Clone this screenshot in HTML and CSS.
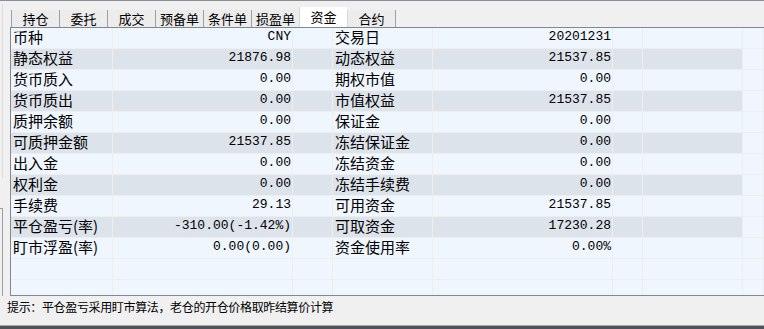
FILE: index.html
```html
<!DOCTYPE html>
<html lang="zh">
<head>
<meta charset="utf-8">
<title>资金</title>
<link rel="stylesheet" href="styles.css">
</head>
<body>
<div class="topline"></div>
<div class="ghost ghost-top"></div>
<div class="ghost ghost-bottom"></div>
<div class="panel">
  <div class="tabs">
    <div class="tab">持仓</div>
    <div class="tab">委托</div>
    <div class="tab">成交</div>
    <div class="tab">预备单</div>
    <div class="tab">条件单</div>
    <div class="tab">损盈单</div>
    <div class="tab active">资金</div>
    <div class="tab">合约</div>
  </div>
  <div class="grid">
    <div class="row"><div class="lbl">币种</div><div class="val">CNY</div><div class="c"></div><div class="lbl">交易日</div><div class="val">20201231</div><div class="c"></div><div class="c"></div><div class="c"></div></div>
    <div class="row alt"><div class="lbl">静态权益</div><div class="val">21876.98</div><div class="c"></div><div class="lbl">动态权益</div><div class="val">21537.85</div><div class="c"></div><div class="c"></div><div class="c light"></div></div>
    <div class="row"><div class="lbl">货币质入</div><div class="val">0.00</div><div class="c"></div><div class="lbl">期权市值</div><div class="val">0.00</div><div class="c"></div><div class="c"></div><div class="c"></div></div>
    <div class="row alt"><div class="lbl">货币质出</div><div class="val">0.00</div><div class="c"></div><div class="lbl">市值权益</div><div class="val">21537.85</div><div class="c"></div><div class="c"></div><div class="c light"></div></div>
    <div class="row"><div class="lbl">质押余额</div><div class="val">0.00</div><div class="c"></div><div class="lbl">保证金</div><div class="val">0.00</div><div class="c"></div><div class="c"></div><div class="c"></div></div>
    <div class="row alt"><div class="lbl">可质押金额</div><div class="val">21537.85</div><div class="c"></div><div class="lbl">冻结保证金</div><div class="val">0.00</div><div class="c"></div><div class="c"></div><div class="c light"></div></div>
    <div class="row"><div class="lbl">出入金</div><div class="val">0.00</div><div class="c"></div><div class="lbl">冻结资金</div><div class="val">0.00</div><div class="c"></div><div class="c"></div><div class="c"></div></div>
    <div class="row alt"><div class="lbl">权利金</div><div class="val">0.00</div><div class="c"></div><div class="lbl">冻结手续费</div><div class="val">0.00</div><div class="c"></div><div class="c"></div><div class="c light"></div></div>
    <div class="row"><div class="lbl">手续费</div><div class="val">29.13</div><div class="c"></div><div class="lbl">可用资金</div><div class="val">21537.85</div><div class="c"></div><div class="c"></div><div class="c"></div></div>
    <div class="row alt"><div class="lbl">平仓盈亏(率)</div><div class="val">-310.00(-1.42%)</div><div class="c"></div><div class="lbl">可取资金</div><div class="val">17230.28</div><div class="c"></div><div class="c"></div><div class="c light"></div></div>
    <div class="row"><div class="lbl">盯市浮盈(率)</div><div class="val">0.00(0.00)</div><div class="c"></div><div class="lbl">资金使用率</div><div class="val">0.00%</div><div class="c"></div><div class="c"></div><div class="c"></div></div>
    <div class="row"><div class="c"></div><div class="c"></div><div class="c"></div><div class="c"></div><div class="c"></div><div class="c"></div><div class="c"></div><div class="c"></div></div>
    <div class="row"><div class="c"></div><div class="c"></div><div class="c"></div><div class="c"></div><div class="c"></div><div class="c"></div><div class="c"></div><div class="c"></div></div>
  </div>
</div>
<div class="status">提示：平仓盈亏采用盯市算法，老仓的开仓价格取昨结算价计算</div>
<div class="bottomline"></div>
<div class="bottombar"></div>
</body>
</html>
```
FILE: styles.css
```css
html, body {
  margin: 0;
  padding: 0;
}
body {
  width: 764px;
  height: 329px;
  overflow: hidden;
  background: #f0f0f0;
  position: relative;
  font-family: "Noto Sans CJK SC", "Noto Sans", sans-serif;
  color: #000;
}
.topline {
  height: 1px;
  background: #8a8e97;
}
.ghost {
  position: absolute;
  left: 2px;
  width: 1px;
}
.ghost-top {
  top: 4px;
  height: 174px;
  background: #dcdcdc;
}
.ghost-bottom {
  top: 208px;
  height: 88px;
  background: #9c9c9c;
}
.ghost-bottom::before {
  content: "";
  position: absolute;
  left: -2px;
  top: 0;
  width: 3px;
  height: 1px;
  background: #9c9c9c;
}
.panel {
  padding-left: 10px;
}
.tabs {
  height: 26px;
  display: flex;
  align-items: flex-end;
  padding-left: 1px;
}
.tab {
  width: 47px;
  height: 17px;
  border-left: 1px solid #a0a0a0;
  background: #ececec;
  font-size: 13px;
  line-height: 17px;
  text-align: center;
}
.tab.active {
  height: 20px;
  line-height: 20px;
  background: #ffffff;
  border-left-color: #d8d8d8;
}
.tab.active + .tab {
  border-left-color: #d8d8d8;
}
.tab:last-child {
  border-right: 1px solid #a0a0a0;
}
.grid {
  height: 267px;
  overflow: hidden;
  border-top: 1px solid #828790;
  border-left: 1px solid #828790;
  border-bottom: 1px solid #828790;
}
.row {
  display: grid;
  grid-template-columns: 102px 180px 40px 100px 180px 30px 100px 1fr;
  height: 21px;
  background: #eff6fe;
}
.row.alt {
  background: #dde3eb;
}
.row > div {
  box-sizing: border-box;
  height: 21px;
  border-right: 1px solid #eeeeee;
  border-bottom: 1px solid #eeeeee;
  white-space: nowrap;
}
.row.alt > .light {
  background: #eff6fe;
}
.lbl {
  font-size: 15px;
  line-height: 17px;
  padding-left: 2px;
}
.val {
  font-family: "Liberation Mono", "DejaVu Sans Mono", monospace;
  font-size: 13px;
  line-height: 17px;
  text-align: right;
  padding-right: 1px;
}
.status {
  height: 29px;
  box-sizing: border-box;
  padding: 3px 0 0 7px;
  font-size: 12px;
  line-height: 16px;
  letter-spacing: -0.35px;
}
.bottomline {
  height: 1px;
  background: #a8a8a8;
}
.bottombar {
  height: 3px;
  background: #4f545b;
}
```
